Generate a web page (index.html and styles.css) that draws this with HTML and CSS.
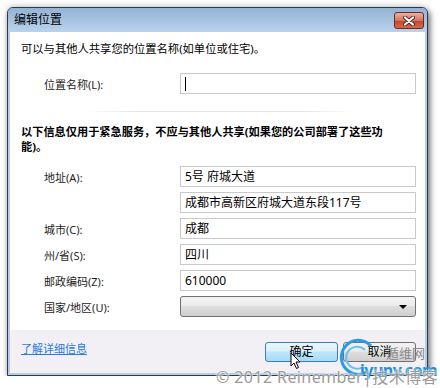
FILE: index.html
```html
<!DOCTYPE html>
<html lang="zh-CN">
<head>
<meta charset="UTF-8">
<title>编辑位置</title>
<link rel="stylesheet" href="styles.css">
</head>
<body>
<div class="window">
  <div class="titlebar">
    <span class="title">编辑位置</span>
    <span class="close">
      <svg width="14" height="10" viewBox="0 0 14 10">
        <path d="M3 1.5 L11 8.5 M11 1.5 L3 8.5" stroke="#5a2418" stroke-width="4" stroke-linecap="round"/>
        <path d="M3 1.5 L11 8.5 M11 1.5 L3 8.5" stroke="#fff" stroke-width="2.2" stroke-linecap="round"/>
      </svg>
    </span>
  </div>
  <div class="client">
    <div class="content">
      <p class="intro">可以与其他人共享您的位置名称(如单位或住宅)。</p>
      <div class="row first">
        <label>位置名称(L):</label>
        <div class="field"><span class="caret"></span></div>
      </div>
      <div class="separator"></div>
      <p class="warning">以下信息仅用于紧急服务，不应与其他人共享(如果您的公司部署了这些功<br>能)。</p>
      <div class="rows">
        <div class="row">
          <label>地址(A):</label>
          <div class="field">5号 府城大道</div>
        </div>
        <div class="row">
          <label></label>
          <div class="field">成都市高新区府城大道东段117号</div>
        </div>
        <div class="row">
          <label>城市(C):</label>
          <div class="field">成都</div>
        </div>
        <div class="row">
          <label>州/省(S):</label>
          <div class="field">四川</div>
        </div>
        <div class="row">
          <label>邮政编码(Z):</label>
          <div class="field">610000</div>
        </div>
        <div class="row">
          <label>国家/地区(U):</label>
          <div class="select"><span class="arrow"></span></div>
        </div>
      </div>
    </div>
    <div class="footer">
      <a class="more" href="#">了解详细信息</a>
      <div class="buttons">
        <span class="btn default">确定</span>
        <span class="btn">取消</span>
      </div>
    </div>
  </div>
</div>

<!-- mouse pointer over the OK button -->
<svg class="pointer" width="12" height="18" viewBox="0 0 12 18">
  <path d="M1 1 L1 14 L4 11 L6.5 16.5 L8.5 15.5 L6 10 L10 10 Z" fill="#fff" stroke="#000" stroke-width="1"/>
</svg>

<!-- watermark -->
<div class="watermark">
  <svg class="swirl" width="40" height="40" viewBox="0 0 40 40">
    <path d="M34 8 A17 17 0 1 0 30 34" fill="none" stroke="#2a9be8" stroke-width="3"/>
    <path d="M28 12 A11 11 0 1 0 26 29" fill="none" stroke="#6cc0f2" stroke-width="2"/>
  </svg>
  <span class="wm-cn">遁维网</span>
  <span class="wm-site">iyunv.com</span>
  <span class="wm-copy">© 2012 Reinember|技术博客</span>
</div>
</body>
</html>
```

FILE: styles.css
```css
body {
  margin: 0;
  background: #fff;
  font-family: "Noto Sans", "Noto Sans CJK SC", sans-serif;
  font-size: 11px;
  color: #000;
}
.window {
  margin: 7px 0 0 7px;
  width: 419px;
  border: 1px solid #2e3a48;
  border-radius: 6px 6px 0 0;
  background: #b4cde9;
  box-shadow: 2px 3px 6px rgba(0, 0, 0, 0.55), 0 -2px 6px rgba(0, 0, 0, 0.12);
}
.titlebar {
  height: 24px;
  display: flex;
  align-items: center;
  justify-content: space-between;
  padding: 0 3px 0 6px;
  border-radius: 5px 5px 0 0;
  background: linear-gradient(#94b3d5, #bad2ec);
}
.title {
  font-size: 12px;
  line-height: 16px;
}
.close {
  width: 28px;
  height: 15px;
  margin-top: 1px;
  display: flex;
  align-items: center;
  justify-content: center;
  border: 1px solid #6b2a1f;
  border-radius: 3px;
  background: linear-gradient(#eab2a4, #d5735f 50%, #c2452c 51%, #d5684e);
}
.client {
  margin: 0 2px 2px 2px;
  background: #fff;
}
.content {
  padding: 9px 9px 13px 11px;
}
p {
  margin: 0;
}
.intro {
  line-height: 16px;
  font-size: 11.3px;
}
.row {
  display: flex;
  align-items: center;
  height: 21px;
  padding-left: 23px;
}
.row.first {
  margin-top: 16px;
}
.row label {
  width: 136px;
  flex: none;
  color: #1e1e1e;
}
.field {
  flex: 1;
  height: 19px;
  border: 1px solid #c9c9c9;
  padding-left: 4px;
  font-size: 12px;
  line-height: 19px;
  display: flex;
  align-items: center;
}
.caret {
  width: 1px;
  height: 14px;
  background: #000;
}
.separator {
  margin: 17px 0 12px 64px;
  width: 270px;
  height: 1px;
  background: linear-gradient(to right, rgba(230, 230, 230, 0), #e4e4e4 20%, #e4e4e4 80%, rgba(230, 230, 230, 0));
}
.warning {
  font-weight: bold;
  line-height: 15px;
  font-size: 11.2px;
}
.rows {
  margin-top: 12px;
  display: flex;
  flex-direction: column;
  gap: 5px;
}
.select {
  flex: 1;
  height: 19px;
  border: 1px solid #707070;
  border-radius: 3px;
  background: linear-gradient(#f3f3f3, #ebebeb 45%, #dddddd 50%, #cfcfcf);
  position: relative;
}
.arrow {
  position: absolute;
  right: 8px;
  top: 8px;
  border-left: 4px solid transparent;
  border-right: 4px solid transparent;
  border-top: 4px solid #000;
}
.footer {
  height: 43px;
  background: #f2f0f4;
  display: flex;
  align-items: flex-start;
  justify-content: space-between;
  padding: 0 9px 0 11px;
}
.more {
  margin-top: 11px;
  color: #2a7ae2;
  line-height: 16px;
}
.buttons {
  display: flex;
  gap: 5px;
  margin-top: 12px;
}
.btn {
  width: 71px;
  height: 18px;
  border: 1px solid #707070;
  border-radius: 3px;
  background: linear-gradient(#f2f2f2, #ebebeb 45%, #dddddd 50%, #cfcfcf);
  font-size: 12px;
  line-height: 18px;
  text-align: center;
}
.btn.default {
  border-color: #3c7fb1;
  background: linear-gradient(#eaf6fd, #d9f0fc 45%, #bee6fd 50%, #a7d9f5);
}
.pointer {
  position: absolute;
  left: 290px;
  top: 352px;
}
.watermark {
  position: absolute;
  left: 0;
  top: 0;
  width: 440px;
  height: 388px;
  pointer-events: none;
}
.swirl {
  position: absolute;
  left: 337px;
  top: 338px;
}
.wm-cn {
  position: absolute;
  left: 386px;
  top: 343px;
  font-size: 13px;
  color: #8a8a8a;
}
.wm-site {
  position: absolute;
  left: 360px;
  top: 359px;
  font-size: 16px;
  font-weight: bold;
  color: #1f8fe0;
  letter-spacing: -0.5px;
}
.wm-copy {
  position: absolute;
  left: 216px;
  top: 364px;
  font-size: 16px;
  letter-spacing: 0.4px;
  color: #9a9a9a;
  text-shadow: 0 0 2px #fff, 0 0 2px #fff;
  white-space: nowrap;
}
```
